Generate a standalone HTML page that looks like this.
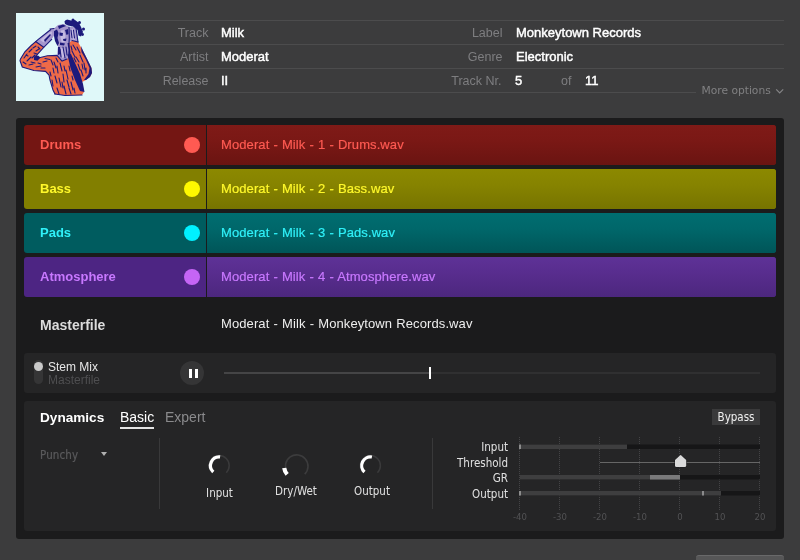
<!DOCTYPE html>
<html><head><meta charset="utf-8">
<style>
*{box-sizing:border-box;margin:0;padding:0}
html,body{width:800px;height:560px;overflow:hidden;background:#3c3c3d;font-family:"Liberation Sans",sans-serif;}
body{position:relative}
.abs{position:absolute}
.art{left:16px;top:13px;width:88px;height:88px;background:#dff8f9;overflow:hidden}
.hl{position:absolute;height:1px;background:#4c4c4d}
.lbl{position:absolute;color:#7e7e80;font-size:12.5px;line-height:16px;text-align:right;white-space:nowrap}
.val{position:absolute;color:#fff;font-size:13px;line-height:16px;white-space:nowrap;-webkit-text-stroke:0.45px #fff}
.panel{left:16px;top:118px;width:768px;height:421px;background:#1b1b1c;border-radius:3px}
.row{position:absolute;left:24px;width:752px;height:40px;border-radius:3px;}
.row .rc{position:absolute;left:183px;top:0;right:0;bottom:0;border-radius:0 3px 3px 0}
.row .name{position:absolute;left:16px;top:12px;font-size:13px;font-weight:bold;line-height:16px}
.row .file{position:absolute;left:197px;top:11.5px;-webkit-text-stroke:0.2px currentColor;font-size:13px;line-height:16px;white-space:nowrap;letter-spacing:0.1px;word-spacing:0.35px}
.row .dot{position:absolute;left:160px;top:12px;width:16px;height:16px;border-radius:50%}
.row .div{position:absolute;left:182px;top:0;width:1px;height:40px;background:#1b1b1c}
.player{left:24px;top:353px;width:752px;height:40px;background:#252526;border-radius:3px}
.dyn{left:24px;top:401px;width:752px;height:130px;background:#252526;border-radius:3px}
.dv{font-family:"DejaVu Sans",sans-serif}
.dvc{font-family:"DejaVu Sans Condensed","DejaVu Sans",sans-serif}
</style></head><body><div id="root" style="position:absolute;left:0;top:0;width:800px;height:560px;will-change:transform;overflow:hidden">
<div class="abs art"><svg width="88" height="88" viewBox="16 13 88 88" style="display:block">
<polygon fill="#ee6a48" points="35.6,41.5 31.2,45.5 24.9,51.8 20.5,58.9 20,60.7 22.3,67 33.9,70.5 45.5,71.4 49,75 50,80 53,90 55,94 65,95.5 82,95 84,92 82,82 86,80 90,77 92,73 91.5,68 88,60.7 83.5,51.8 78,42 72,40.5 68.3,43 69.5,55 67,59 62,61 57,55.4 47.3,55.8 38.3,58 35.6,56.3 43.7,47.3"/>
<g fill="#a496cc">
<polygon points="35.6,41.5 38.3,39.3 50.8,29.5 54,28.5 55.5,33 51.7,39.3 43.7,47.3"/>
<polygon points="54,28.5 58,25 64,24 69,27 69,43 69.5,55 67,59 62,61 57,55.4 58,46 55,40 55.5,33"/>
<polygon points="67.4,28.5 71,26.5 76,27.7 77.5,34 78,42 72,40.5 68.3,43"/>
</g>
<g fill="#c4bae2"><polygon points="61,30.5 64,30 65.5,36 64.5,42 61.5,42 60.5,37"/><polygon points="40,40 49,32.5 52,31.5 51.5,35 44,42.5"/><polygon points="70,29.5 74,28.5 75.5,34 75,40 71,39"/><polygon points="60.5,48 64,48 65,57 62,58"/></g>
<g fill="#1d1a7c">
<path d="M64.5,21.5 67,19.5 71,20.5 75,20 79,23 81,27 83,32 81,36.5 78.5,35.5 77.5,30 73,26.5 68,25.5 65,24Z"/>
<circle cx="66.5" cy="21.5" r="1.6"/><circle cx="73" cy="20" r="1.5"/><circle cx="79.5" cy="22.5" r="1.5"/><circle cx="83.5" cy="29" r="1.5"/><circle cx="82.5" cy="34.5" r="1.4"/>
<polygon points="67.4,54.5 71,54 75.5,64 80,74 83,84 84.5,92 80,91 75,80 70.5,68"/>
<polygon points="67.5,43 69.5,43 70.5,54.5 68,58 68.5,50"/>
<polygon points="33.9,56.5 38,55.5 40.5,57.5 37.5,60.7 34,60"/>
<polygon points="54,31 57,29.5 58.5,33 57.5,38 59,43 57.5,46 55,41 54,36"/>
<polygon points="58,26 63,24.5 66,26 62,27.5 59,29"/>
<polygon points="81,46 83.5,51.8 88,60.7 91.5,68 92,73 90,77 86,80 84,80 88.5,74 89.5,68 86,60 81.5,52"/>
<polygon points="59.5,32.5 63,33 62.5,36 59.5,35.5"/><polygon points="65,30 68,29 68.5,34 66.5,35"/><polygon points="58,47 60,47 60.5,54 58,55"/><polygon points="44,40 50,34 51,35 45,42"/><polygon points="63,39 66.5,38.5 66,41 63.5,41"/><polygon points="60,42.5 65,43.5 64,45.5 60,45"/>
</g>
<g stroke="#1d1a7c" stroke-width="1.1" fill="none" stroke-linecap="round">
<path d="M50.8 29.5 L38.3 39.3 L31.2 45.5 L24.9 51.8 L20.5 58.9 L20 60.7 L22.3 67 L33.9 70.5 L45.5 71.4 L49 75 L50 80 L53 90 L55 94"/><path d="M51.7 39.3 L43.7 47.3 L35.6 56.3"/><path d="M35.6 41.5 L43.7 47.3"/><path d="M50 29 L54 28.5"/>
<path d="M69 27 L69.3 38 L69 43"/>
<path d="M63 47 L65 58"/><path d="M60 49 L61 57"/><path d="M66 47 L67 55"/>
<path d="M72 40.5 L78 42"/><path d="M76 28 L78 42"/><path d="M71 30 l1 8 M73.5 30 l1 8"/>
<path d="M55 94 L65 95.5 L82 95"/><path d="M38.3 58 L47.3 55.8 L57 55.4 L62 61 L67 59"/>
<path d="M24 58 l3 -4 M27 61 l4 -4 M29 52 l3 -3 M33 48 l3 -2 M26 55 l2 1 M32 58 l3 -3 M36 51 l3 -2 M29 65 l4 -1 M36 67 l5 -1 M43 62 l4 -1 M41 68 l4 0 M45 58.5 l5 1 M23 62 l3 2 M31 62 l4 1 M38 63 l3 1 M34 53 l3 1 M38 47 l2 2"/>
<path d="M54 62 l2 6 M57 66 l1 7 M60 63 l2 8 M55 76 l2 7 M59 78 l2 9 M63 74 l1 8 M66 70 l2 9 M64 86 l2 8 M57 88 l2 6 M69 88 l2 6 M53 68 l1 5 M51 60 l2 5 M62 82 l1 6 M67 80 l2 7 M71 82 l2 8 M74 88 l1 5 M52 80 l1 6 M64 66 l1 5 M69 66 l1 5 M50 72 l1 4 M56 58 l2 4 M72 76 l1 4"/>
<path d="M73 45 l3 5 M77 47 l3 6 M72 51 l3 6 M80 55 l3 7 M76 57 l3 5 M84 63 l1 7 M81 70 l2 6 M74 58 l2 4 M78 64 l2 6 M82 64 l1 5 M77 70 l2 5 M71 46 l1 4 M86 68 l0 5"/>
</g>
</svg></div>
<div class="hl" style="left:120px;top:20px;width:664px"></div>
<div class="hl" style="left:120px;top:44px;width:664px"></div>
<div class="hl" style="left:120px;top:68px;width:664px"></div>
<div class="hl" style="left:120px;top:92px;width:576px"></div>
<div class="lbl" style="right:591.5px;top:25px">Track</div>
<div class="lbl" style="right:591.5px;top:49px">Artist</div>
<div class="lbl" style="right:591.5px;top:73px">Release</div>
<div class="val" style="left:221px;top:25px">Milk</div>
<div class="val" style="left:221px;top:49px">Moderat</div>
<div class="val" style="left:221px;top:73px">II</div>
<div class="lbl" style="right:297.5px;top:25px">Label</div>
<div class="lbl" style="right:297.5px;top:49px">Genre</div>
<div class="lbl" style="right:298.5px;top:73px">Track Nr.</div>
<div class="val" style="left:516px;top:25px">Monkeytown Records</div>
<div class="val" style="left:516px;top:49px">Electronic</div>
<div class="val" style="left:515px;top:73px">5</div>
<div class="lbl" style="left:561px;top:73px">of</div>
<div class="val" style="left:585px;top:73px">11</div>
<div class="lbl dv" style="left:701.5px;top:83px;font-size:10.7px;color:#808082">More options</div>
<svg class="abs" style="left:774px;top:86px" width="12" height="10" viewBox="0 0 12 10"><path d="M2.2 3.4 L5.7 7 L9.2 3.4" stroke="#848486" stroke-width="1.2" fill="none"/></svg>

<div class="abs panel"></div>
<div class="row" style="top:125px;background-color:#741613;color:#ff5a52"><span class="rc" style="background:linear-gradient(#7f1a17,#7a1815 40%,#6a1411)"></span><span class="name">Drums</span><span class="dot" style="background:#ff5a52"></span><span class="div"></span><span class="file">Moderat - Milk - 1 - Drums.wav</span></div>
<div class="row" style="top:169px;background-color:#827f00;color:#fff82a"><span class="rc" style="background:linear-gradient(#8c8900,#868300 40%,#777400)"></span><span class="name">Bass</span><span class="dot" style="background:#fff800"></span><span class="div"></span><span class="file">Moderat - Milk - 2 - Bass.wav</span></div>
<div class="row" style="top:213px;background-color:#005c5f;color:#2ff0f8"><span class="rc" style="background:linear-gradient(#006d70,#00676a 40%,#005558)"></span><span class="name">Pads</span><span class="dot" style="background:#00f0ff"></span><span class="div"></span><span class="file">Moderat - Milk - 3 - Pads.wav</span></div>
<div class="row" style="top:257px;background-color:#4d2583;color:#c878ff"><span class="rc" style="background:linear-gradient(#5e3297,#582d8e 40%,#4c277e)"></span><span class="name">Atmosphere</span><span class="dot" style="background:#c565f5"></span><span class="div"></span><span class="file">Moderat - Milk - 4 - Atmosphere.wav</span></div>
<div class="abs" style="left:40px;top:317px;font-size:14px;font-weight:bold;color:#dcdcdc;line-height:16px">Masterfile</div>
<div class="abs" style="left:221px;top:316px;font-size:13px;color:#eee;line-height:16px;letter-spacing:0.1px;word-spacing:0.4px;white-space:nowrap">Moderat - Milk - Monkeytown Records.wav</div>

<div class="abs player">
<div class="abs" style="left:10px;top:7px;width:9px;height:24px;border-radius:4.5px;background:#353536"></div>
<div class="abs" style="left:10px;top:9px;width:9px;height:9px;border-radius:50%;background:#c9c9c9"></div>
<div class="abs" style="left:24px;top:6.5px;font-size:12px;line-height:14px;color:#e6e6e6">Stem Mix</div>
<div class="abs" style="left:24px;top:19.5px;font-size:12px;line-height:14px;color:#4e4e50">Masterfile</div>
<div class="abs" style="left:156px;top:8px;width:24px;height:24px;border-radius:50%;background:#353536"></div>
<div class="abs" style="left:164.5px;top:15.5px;width:3.2px;height:9.5px;background:#fff"></div>
<div class="abs" style="left:170.5px;top:15.5px;width:3.2px;height:9.5px;background:#fff"></div>
<div class="abs" style="left:200px;top:19px;width:536px;height:2px;background:#303031"></div>
<div class="abs" style="left:200px;top:19px;width:205px;height:2px;background:#454546"></div>
<div class="abs" style="left:405px;top:14px;width:2px;height:12px;background:#fff"></div>
</div>
<div class="abs dyn">
<div class="abs" style="left:16px;top:8px;font-size:13.6px;font-weight:bold;color:#fff;line-height:17px">Dynamics</div>
<div class="abs" style="left:96px;top:8px;font-size:14px;color:#fff;line-height:17px">Basic</div>
<div class="abs" style="left:96px;top:26px;width:34px;height:1.5px;background:#e4e4e4"></div>
<div class="abs" style="left:141px;top:8px;font-size:14px;color:#8a8a8c;line-height:17px">Expert</div>
<div class="abs dvc" style="left:16px;top:47px;font-size:11.5px;color:#5a5a5c;line-height:14px;letter-spacing:0.1px;-webkit-text-stroke:0.2px #5a5a5c">Punchy</div>
<div class="abs" style="left:76.5px;top:51px;width:0;height:0;border-left:3px solid transparent;border-right:3px solid transparent;border-top:4.5px solid #b0b0b0"></div>
<div class="abs" style="left:135px;top:37px;width:1px;height:71px;background:#39393a"></div>
<div class="abs" style="left:408px;top:37px;width:1px;height:71px;background:#39393a"></div>
<svg class="abs" style="left:0;top:0" width="752" height="130" viewBox="0 0 752 130">
<g fill="none" stroke-linecap="butt">
<path d="M188.13 71.67 A10 10 0 1 1 202.27 71.67" stroke="#3a3a3b" stroke-width="1.5"/>
<path d="M189.27 70.96 A8.7 8.7 0 0 1 196.11 55.95" stroke="#fff" stroke-width="3.2"/>
<path d="M262.91 70.85 A11.3 11.3 0 1 1 280.69 73.19" stroke="#3c3c3d" stroke-width="1.6"/>
<path d="M263.19 73.47 A12.6 12.6 0 0 1 260.22 66.95" stroke="#fff" stroke-width="4.2"/>
<path d="M339.33 71.67 A10 10 0 1 1 353.47 71.67" stroke="#3a3a3b" stroke-width="1.5"/>
<path d="M340.47 70.96 A8.7 8.7 0 0 1 347.91 56.03" stroke="#fff" stroke-width="3.2"/>
</g>
<g stroke="#444446" stroke-width="1" stroke-dasharray="1 1">
<path d="M495.5 36V109.5M535.5 36V109.5M575.5 36V109.5M615.5 36V109.5M655.5 36V109.5M695.5 36V109.5M735.5 36V109.5"/>
</g>
<rect x="496" y="43.5" width="240" height="4.5" fill="#161617"/>
<rect x="496" y="43.5" width="107" height="4.5" fill="#3e3e3f"/>
<rect x="495" y="43.5" width="2" height="4.5" fill="#8c8c8c"/>
<rect x="576" y="61" width="160" height="1" fill="#666"/>
<path d="M651 58.9 L655.9 54.4 Q656.6 53.8 657.3 54.4 L662.2 58.9 V64.5 Q662.2 66 660.7 66 H652.5 Q651 66 651 64.5 Z" fill="#dadada" stroke="#1b1b1c" stroke-width="1" paint-order="stroke"/>
<rect x="496" y="74" width="240" height="4.5" fill="#161617"/>
<rect x="496" y="74" width="160" height="4.5" fill="#3e3e3f"/>
<rect x="626" y="74" width="30" height="4.5" fill="#7a7a7b"/>
<rect x="496" y="90" width="240" height="4.5" fill="#161617"/>
<rect x="496" y="90" width="201" height="4.5" fill="#3e3e3f"/>
<rect x="495" y="90" width="2" height="4.5" fill="#8c8c8c"/>
<rect x="678" y="90" width="2" height="4.5" fill="#8a8a8b"/>
<g font-family="DejaVu Sans Condensed, DejaVu Sans, sans-serif" font-size="9.5" fill="#525254" text-anchor="middle">
<text x="496" y="118.7">-40</text><text x="536" y="118.7">-30</text><text x="576" y="118.7">-20</text><text x="616" y="118.7">-10</text><text x="656" y="118.7">0</text><text x="696" y="118.7">10</text><text x="736" y="118.7">20</text>
</g>
<g font-family="DejaVu Sans Condensed, DejaVu Sans, sans-serif" font-size="11.5" fill="#e0e0e0" text-anchor="end">
<text x="484" y="49.5">Input</text><text x="484" y="65.5">Threshold</text><text x="484" y="81">GR</text><text x="484" y="97">Output</text>
</g>
<g font-family="DejaVu Sans Condensed, DejaVu Sans, sans-serif" font-size="11.5" fill="#e0e0e0" text-anchor="middle">
<text x="195.5" y="95.5">Input</text><text x="272" y="94">Dry/Wet</text><text x="348" y="94">Output</text>
</g>
</svg>
<div class="abs dvc" style="left:688px;top:7.5px;width:48px;height:16px;background:#3a3a3b;color:#f0f0f0;font-size:11.5px;line-height:16px;text-align:center">Bypass</div>
</div>
<div class="abs" style="left:696px;top:555px;width:88px;height:20px;border-radius:3px;background:#565657;border-top:1px solid #69696a"></div>
</div></body></html>
